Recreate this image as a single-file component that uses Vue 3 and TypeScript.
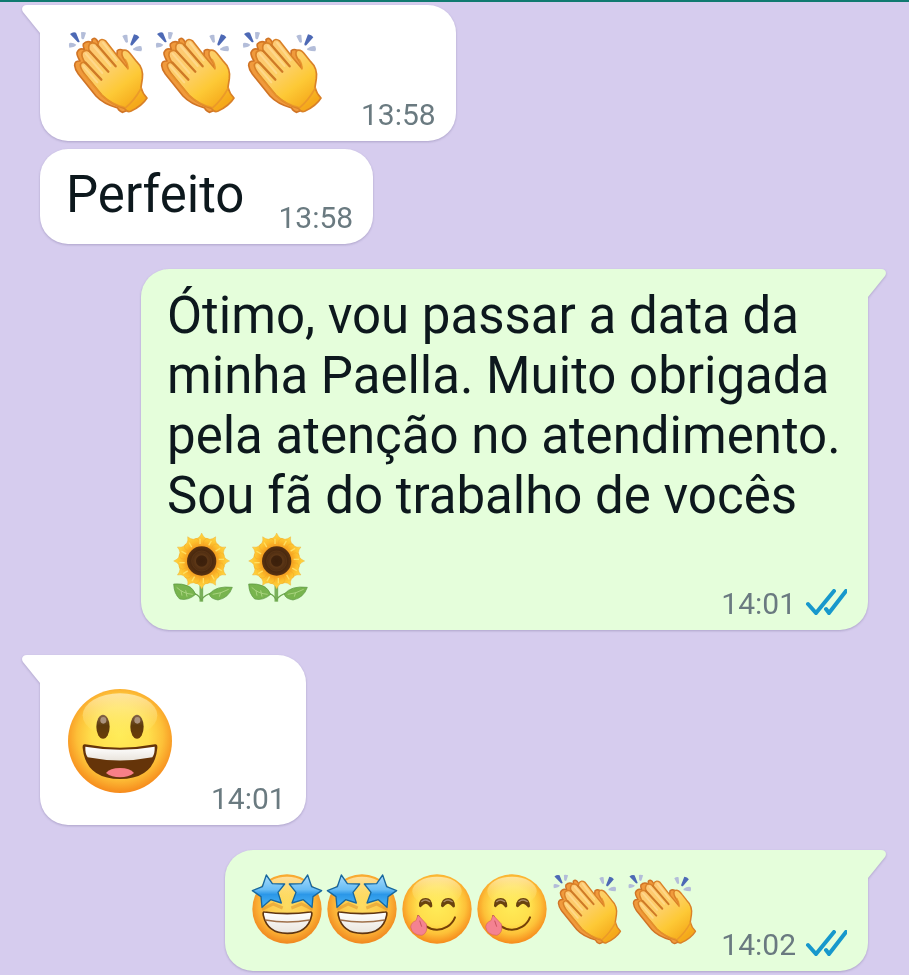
<script setup lang="ts">
type EmojiName = 'clap' | 'sunflower' | 'grin' | 'star' | 'yum'
type EmojiSize = 'small' | 'medium' | 'large'

interface Message {
  id: number
  side: 'in' | 'out'
  first: boolean
  text?: string
  emojis?: EmojiName[]
  size?: EmojiSize
  time: string
}

const viewBoxes: Record<EmojiName, string> = {
  clap: '198 90 252 252',
  sunflower: '78 66 216 216',
  grin: '168 140 324 324',
  star: '93 102 216 216',
  yum: '33 102 216 216',
}

const labels: Record<EmojiName, string> = {
  clap: '👏',
  sunflower: '🌻',
  grin: '😃',
  star: '🤩',
  yum: '😋',
}

const messages: Message[] = [
  { id: 1, side: 'in', first: true, emojis: ['clap', 'clap', 'clap'], size: 'medium', time: '13:58' },
  { id: 2, side: 'in', first: false, text: 'Perfeito', time: '13:58' },
  {
    id: 3,
    side: 'out',
    first: true,
    text: 'Ótimo, vou passar a data da minha Paella. Muito obrigada pela atenção no atendimento. Sou fã do trabalho de vocês',
    emojis: ['sunflower', 'sunflower'],
    size: 'small',
    time: '14:01',
  },
  { id: 4, side: 'in', first: true, emojis: ['grin'], size: 'large', time: '14:01' },
  { id: 5, side: 'out', first: true, emojis: ['star', 'star', 'yum', 'yum', 'clap', 'clap'], size: 'small', time: '14:02' },
]

const petals = Array.from({ length: 12 }, (_, i) => i * 30)
</script>

<template>
  <svg class="defs" aria-hidden="true">
    <defs>
      <radialGradient id="face" cx="0.5" cy="0.45" r="0.55">
        <stop offset="0" stop-color="#ffec58" />
        <stop offset="0.5" stop-color="#ffdf4c" />
        <stop offset="0.75" stop-color="#fdc038" />
        <stop offset="1" stop-color="#f68a1c" />
      </radialGradient>
      <radialGradient id="warm" cx="0.5" cy="0.45" r="0.55">
        <stop offset="0" stop-color="#fddc62" />
        <stop offset="0.5" stop-color="#fdcb4c" />
        <stop offset="0.75" stop-color="#fbb135" />
        <stop offset="1" stop-color="#f0871f" />
      </radialGradient>
      <linearGradient id="gloss" x1="0" y1="0" x2="0" y2="1">
        <stop offset="0" stop-color="#fff3cc" stop-opacity="0.7" />
        <stop offset="1" stop-color="#fff27a" stop-opacity="0" />
      </linearGradient>
      <linearGradient id="teeth" x1="0" y1="0" x2="0" y2="1">
        <stop offset="0" stop-color="#ffffff" />
        <stop offset="1" stop-color="#e9e4dc" />
      </linearGradient>
      <linearGradient id="eye" x1="0" y1="0" x2="0" y2="1">
        <stop offset="0" stop-color="#85654a" />
        <stop offset="0.45" stop-color="#5d3a0c" />
        <stop offset="1" stop-color="#6b3d08" />
      </linearGradient>
      <linearGradient id="blue" x1="0" y1="0" x2="0" y2="1">
        <stop offset="0" stop-color="#a9dcfb" />
        <stop offset="0.45" stop-color="#69bdf5" />
        <stop offset="0.6" stop-color="#2b97e8" />
        <stop offset="1" stop-color="#4ab4f4" />
      </linearGradient>
      <linearGradient id="skin" gradientUnits="userSpaceOnUse" x1="270" y1="130" x2="410" y2="310">
        <stop offset="0" stop-color="#fdc877" />
        <stop offset="0.45" stop-color="#fdcf63" />
        <stop offset="0.7" stop-color="#fdc936" />
        <stop offset="1" stop-color="#f5a91a" />
      </linearGradient>
      <radialGradient id="seeds">
        <stop offset="0" stop-color="#3a1f0b" />
        <stop offset="0.35" stop-color="#3f220c" />
        <stop offset="0.42" stop-color="#5d3716" />
        <stop offset="0.75" stop-color="#4a290f" />
        <stop offset="1" stop-color="#5b3310" />
      </radialGradient>
      <radialGradient id="petal" gradientUnits="userSpaceOnUse" cx="182" cy="153" r="86">
        <stop offset="0.45" stop-color="#f2951c" />
        <stop offset="0.7" stop-color="#fdbe2c" />
        <stop offset="1" stop-color="#ffdc48" />
      </radialGradient>
    </defs>

    <symbol id="clap" overflow="visible">
      <g>
        <path fill="#4d69b5" d="M210 102Q219 95 228 98L239 125Q236 128 232 125Z" />
        <path fill="#b3bdd9" d="M243 97Q251 94 258 98L252 116Q246 120 244 114Z" />
        <path fill="#b3bdd9" d="M208 129Q219 127 229 134Q226 141 208 143Q205 136 208 129Z" />
        <path fill="#4d69b5" d="M402 103Q413 104 418 112L397 136Q391 138 391 132Z" />
        <path fill="#b3bdd9" d="M367 108Q375 103 382 105L384 126Q380 131 376 126Z" />
        <path fill="#b3bdd9" d="M399 146Q412 136 424 139Q428 147 424 154Q411 154 400 150Z" />
      </g>
      <path fill="#f09a3c" stroke="#d07425" stroke-width="5" stroke-linejoin="round" d="M294 126Q285 109 276 119Q277 125 276 128Q260 120 250 132Q248 138 253 148Q237 143 231 158Q230 166 240 183Q224 182 224 196Q225 208 235 222L288 288Q310 312 353 324Q357 334 368 337L400 324L390 170Q367 140 352 152L350 170Z" />
      <path fill="url(#skin)" stroke="#d98128" stroke-width="5" stroke-linejoin="round" d="M296 125Q304 113 317 123L354 170L383 205Q383 192 374 181Q361 163 368 152Q380 146 394 165L410 185Q431 205 427 236L423 262Q427 279 441 294Q427 317 392 334Q381 338 374 325Q337 315 306 286L257 226Q240 205 241 194Q247 183 257 190Q242 170 247 157Q257 146 269 155Q263 142 269 132Q281 123 293 136Z" />
      <path fill="none" stroke="#cf7a26" stroke-width="7" stroke-linecap="round" d="M292 135L347 199M268 153L325 215M256 188L304 239" />
      <path fill="none" stroke="#ffe0a0" stroke-width="6" stroke-linecap="round" opacity="0.6" d="M309 128L350 181M281 138L332 198M257 161L307 219M250 198L292 247" />
      <path fill="none" stroke="#e8932a" stroke-width="5" stroke-linecap="round" opacity="0.8" d="M376 179Q385 194 384 207M424 264Q402 303 376 324M253 224L306 286Q335 313 371 321" />
    </symbol>

    <symbol id="sunflower" overflow="visible">
      <path fill="none" stroke="#79b05a" stroke-width="11" d="M181 226V275" />
      <path fill="none" stroke="#6ca54e" stroke-width="4" d="M142 249Q170 246 181 270Q190 254 217 247" />
      <path fill="#78b44e" stroke="#599541" stroke-width="2" d="M98 222Q151 218 164 253Q142 273 116 267Q99 251 98 222Z" />
      <path fill="#78b44e" stroke="#599541" stroke-width="2" d="M274 232Q226 226 205 252Q207 266 231 270Q263 264 274 232Z" />
      <path fill="none" stroke="#a9d37f" stroke-width="3" d="M107 232Q126 251 155 253M263 238Q239 251 215 253M120 242L123 257M134 241L138 260M239 247L235 260" />
      <circle cx="182" cy="153" r="67" fill="#f0a024" />
      <g fill="url(#petal)" stroke="#eea022" stroke-width="1">
        <path v-for="angle in petals" :key="angle" d="M182 153L157 96Q160 84 171 84Q178 80 182 69Q186 80 193 84Q204 84 207 96Z" :transform="`rotate(${angle} 182 153)`" />
      </g>
      <g stroke="#ffdf62" stroke-width="4">
        <path v-for="angle in petals" :key="angle" d="M177 86V102" :transform="`rotate(${angle} 182 153)`" />
      </g>
      <circle cx="182" cy="153" r="44" fill="url(#seeds)" />
      <circle cx="182" cy="153" r="30" fill="none" stroke="#6b421c" stroke-width="2" opacity="0.5" />
    </symbol>

    <symbol id="grin" overflow="visible">
      <circle cx="330" cy="302" r="156" fill="url(#face)" />
      <ellipse cx="330" cy="225" rx="112" ry="66" fill="url(#gloss)" />
      <ellipse cx="279" cy="259" rx="20" ry="36" fill="url(#eye)" />
      <ellipse cx="381" cy="259" rx="20" ry="36" fill="url(#eye)" />
      <ellipse cx="280" cy="240" rx="9" ry="10" fill="#aa927e" />
      <ellipse cx="382" cy="240" rx="9" ry="10" fill="#aa927e" />
      <path fill="#653409" d="M225 312Q330 332 435 312Q443 311 442 323Q433 416 330 416Q228 416 218 323Q217 311 225 312Z" />
      <path fill="url(#teeth)" d="M226 319Q330 337 434 319Q435 340 427 351Q330 370 233 351Q225 340 226 319Z" />
      <path fill="#f87f87" d="M288 398Q300 383 330 383Q360 383 372 398Q355 411 330 411Q305 411 288 398Z" />
    </symbol>

    <symbol id="star" overflow="visible">
      <circle cx="201" cy="210" r="104" fill="url(#warm)" />
      <ellipse cx="201" cy="155" rx="68" ry="42" fill="url(#gloss)" />
      <path fill="none" stroke="#d68724" stroke-width="9" opacity="0.45" d="M126 211L160 195L188 207M214 207L244 195L278 211" />
      <g fill="url(#blue)" stroke="#17679e" stroke-width="4" stroke-linejoin="round">
        <path d="M139 108L157 134L194 135L174 160L184 192L152 182L126 205L123 173L97 155L127 143Z" />
        <path d="M263 108L245 134L208 135L228 160L216 192L250 182L276 205L279 173L305 155L275 143Z" />
      </g>
      <path fill="url(#teeth)" stroke="#5f3511" stroke-width="5" stroke-linejoin="round" d="M133 219Q201 229 271 219Q277 218 275 229Q264 283 202 283Q142 283 130 229Q128 218 133 219Z" />
      <path fill="none" stroke="#9f704a" stroke-width="4" d="M136 243Q201 255 269 243" />
    </symbol>

    <symbol id="yum" overflow="visible">
      <circle cx="141" cy="210" r="104" fill="url(#face)" />
      <ellipse cx="141" cy="157" rx="74" ry="44" fill="url(#gloss)" />
      <path fill="#69420f" d="M87 201Q86 177 107 177Q126 177 127 202Q122 209 118 202Q108 186 95 202Q91 208 87 201ZM153 201Q154 177 175 177Q194 177 195 202Q191 209 186 202Q174 186 162 202Q158 208 153 201Z" />
      <path fill="none" stroke="#aa8a65" stroke-width="4" stroke-linecap="round" d="M95 188Q106 178 119 188M162 188Q174 178 187 188" />
      <path fill="none" stroke="#754008" stroke-width="6" stroke-linecap="round" d="M85 231C104 285 175 285 195 235" />
      <path fill="#f48291" stroke="#d66064" stroke-width="2" d="M84 228L109 255Q115 281 96 289Q67 289 62 264Q64 249 78 245Z" />
      <path fill="none" stroke="#c9535f" stroke-width="3" d="M89 245L95 263" />
    </symbol>
  </svg>

  <main class="chat">
    <article v-for="m in messages" :key="m.id" class="bubble" :class="[m.side, { first: m.first }]">
      <svg v-if="m.first" class="tail" viewBox="0 0 20 28" aria-hidden="true">
        <path d="M20 0H5C0 0-1 4 1 7L18 28H20Z" />
      </svg>
      <p v-if="m.text && m.emojis" class="text">{{ m.text }}</p>
      <div class="row" :class="m.size">
        <p v-if="m.text && !m.emojis" class="text single">{{ m.text }}</p>
        <div v-if="m.emojis" class="emojis" :class="{ after: m.text }">
          <svg v-for="(name, i) in m.emojis" :key="i" class="emoji" :viewBox="viewBoxes[name]" role="img" :aria-label="labels[name]">
            <use :href="`#${name}`" />
          </svg>
        </div>
        <footer class="meta">
          <time>{{ m.time }}</time>
          <svg v-if="m.side === 'out'" class="checks" viewBox="0 0 42 26" aria-hidden="true">
            <path d="M3 15L11 24L29 2M21 20L24 24L41 2" />
          </svg>
        </footer>
      </div>
    </article>
  </main>
</template>

<style>
body {
  margin: 0;
  background: #d6ccee;
}
</style>

<style scoped>
.defs {
  position: absolute;
  width: 0;
  height: 0;
}

.chat {
  display: flex;
  flex-direction: column;
  padding: 3px 41px 4px 40px;
  border-top: 2px solid #107a70;
  font-family: Roboto, "Liberation Sans", sans-serif;
}

.bubble {
  position: relative;
  box-sizing: border-box;
  max-width: 727px;
  margin-top: 8px;
  padding: 0 20px 11px 26px;
  border-radius: 28px;
  filter: drop-shadow(0 1px 1px rgba(80, 70, 120, 0.3));
}

.bubble.first {
  margin-top: 25px;
}

.bubble:first-child {
  margin-top: 0;
}

.in {
  align-self: flex-start;
  background: #ffffff;
}

.out {
  align-self: flex-end;
  padding-right: 21px;
  background: #e5fedb;
}

.in.first {
  border-top-left-radius: 0;
}

.out.first {
  border-top-right-radius: 0;
}

.tail {
  position: absolute;
  top: 0;
  width: 20px;
  height: 28px;
}

.in .tail {
  left: -18px;
  fill: #ffffff;
}

.out .tail {
  right: -18px;
  fill: #e5fedb;
  transform: scaleX(-1);
}

.text {
  margin: 0;
  padding-top: 17px;
  color: #0d181d;
  font-size: 51px;
  line-height: 60px;
}

.single {
  padding: 16px 0 8px;
}

.row {
  display: flex;
  align-items: flex-end;
  justify-content: space-between;
  gap: 34px;
}

.emojis {
  display: flex;
  gap: 3px;
}

.emoji {
  display: block;
  width: 72px;
  height: 72px;
  overflow: visible;
}

.small {
  gap: 23px;
}

.small .emojis {
  padding: 23px 0 15px;
}

.small .after {
  padding-top: 6px;
}

.medium,
.large {
  gap: 37px;
}

.medium .emojis {
  padding: 25px 0 16px;
}

.medium .emoji {
  width: 84px;
  height: 84px;
}

.large .emojis {
  padding: 32px 0 19px;
}

.large .emoji {
  width: 108px;
  height: 108px;
}

.meta {
  display: flex;
  align-items: flex-end;
  gap: 9px;
  color: #6a7a80;
  font-size: 30px;
  line-height: 30px;
}

.checks {
  width: 42px;
  height: 26px;
  margin-bottom: 4px;
  fill: none;
  stroke: #1798cc;
  stroke-width: 4;
  stroke-linecap: round;
}
</style>
